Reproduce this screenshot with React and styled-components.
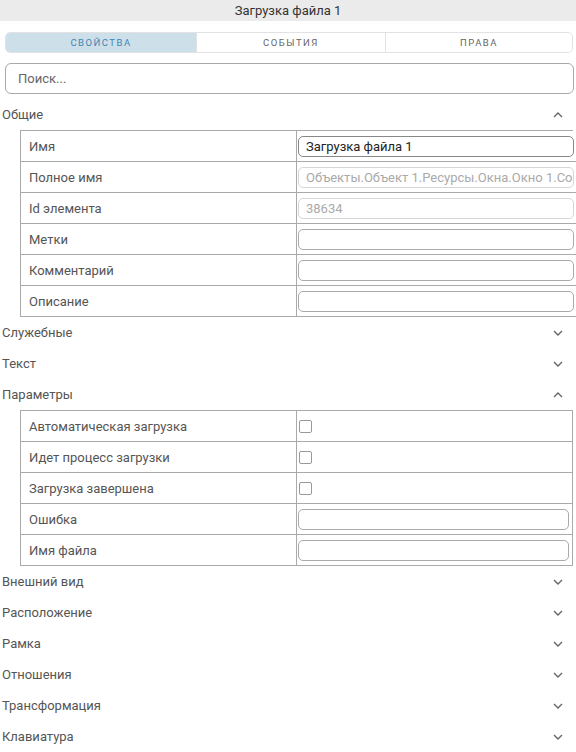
import React from "react";
import styled, { createGlobalStyle } from "styled-components";

const GlobalStyle = createGlobalStyle`
  html, body {
    margin: 0;
    padding: 0;
    background: #ffffff;
  }
  body {
    font-family: Roboto, "Liberation Sans", sans-serif;
    color: #555;
  }
`;

const general = [
  { label: "Имя", kind: "input", value: "Загрузка файла 1", strong: true },
  { label: "Полное имя", kind: "input", value: "Объекты.Объект 1.Ресурсы.Окна.Окно 1.Со", disabled: true },
  { label: "Id элемента", kind: "input", value: "38634", disabled: true },
  { label: "Метки", kind: "input", value: "" },
  { label: "Комментарий", kind: "input", value: "" },
  { label: "Описание", kind: "input", value: "" },
];

const params = [
  { label: "Автоматическая загрузка", kind: "check" },
  { label: "Идет процесс загрузки", kind: "check" },
  { label: "Загрузка завершена", kind: "check" },
  { label: "Ошибка", kind: "input", value: "" },
  { label: "Имя файла", kind: "input", value: "" },
];

const sections = [
  { title: "Общие", open: true, rows: general },
  { title: "Служебные" },
  { title: "Текст" },
  { title: "Параметры", open: true, rows: params },
  { title: "Внешний вид" },
  { title: "Расположение" },
  { title: "Рамка" },
  { title: "Отношения" },
  { title: "Трансформация" },
  { title: "Клавиатура" },
];

function Chevron({ up }) {
  return (
    <svg width="10" height="6" viewBox="0 0 10 6">
      <polyline
        points={up ? "1,5 5,1 9,5" : "1,1 5,5 9,1"}
        fill="none"
        stroke="#666"
        strokeWidth="1.4"
      />
    </svg>
  );
}

function Row({ row }) {
  return (
    <>
      <LabelCell>{row.label}</LabelCell>
      <ValueCell>
        {row.kind === "check" ? (
          <CheckBox />
        ) : (
          <Field $disabled={row.disabled} $strong={row.strong}>
            {row.value}
          </Field>
        )}
      </ValueCell>
    </>
  );
}

function App() {
  return (
    <Panel>
      <GlobalStyle />
      <TitleBar>Загрузка файла 1</TitleBar>
      <Tabs>
        <Tab $active>Свойства</Tab>
        <Tab>События</Tab>
        <Tab>Права</Tab>
      </Tabs>
      <Search>Поиск...</Search>
      <Sections>
        {sections.map((s) => (
          <div key={s.title}>
            <SectionHeader>
              <span>{s.title}</span>
              <Chevron up={s.open} />
            </SectionHeader>
            {s.open && (
              <Table>
                {s.rows.map((r) => (
                  <Row key={r.label} row={r} />
                ))}
              </Table>
            )}
          </div>
        ))}
      </Sections>
    </Panel>
  );
}

const Panel = styled.div`
  width: 576px;
  height: 752px;
  overflow: hidden;
  display: flex;
  flex-direction: column;
`;

const TitleBar = styled.div`
  height: 22px;
  background: #ebebeb;
  color: #333;
  font-size: 13px;
  display: flex;
  align-items: center;
  justify-content: center;
`;

const Tabs = styled.div`
  margin: 11px 3px 0 5px;
  height: 23px;
  display: grid;
  grid-template-columns: 190px 189px 1fr;
  border: 1px solid #e2e2e2;
  border-radius: 5px;
  overflow: hidden;
  box-sizing: border-box;
`;

const Tab = styled.div`
  display: flex;
  align-items: center;
  justify-content: center;
  text-transform: uppercase;
  font-size: 9.5px;
  letter-spacing: 1.5px;
  background: ${(p) => (p.$active ? "#cde0ea" : "#fff")};
  color: ${(p) => (p.$active ? "#3d86b3" : "#666")};
  & + & {
    border-left: 1px solid #e2e2e2;
  }
`;

const Search = styled.div`
  margin: 10px 2px 0 5px;
  height: 33px;
  box-sizing: border-box;
  border: 1px solid #aaa;
  border-radius: 6px;
  padding-left: 12px;
  display: flex;
  align-items: center;
  font-size: 13px;
  color: #666;
`;

const Sections = styled.div`
  margin-top: 5px;
  display: flex;
  flex-direction: column;
`;

const SectionHeader = styled.div`
  height: 31px;
  display: flex;
  align-items: center;
  justify-content: space-between;
  padding: 0 13px 0 2px;
  font-size: 13px;
  color: #555;
`;

const Table = styled.div`
  margin: 0 3px 0 20px;
  display: grid;
  grid-template-columns: 276px 1fr;
  grid-auto-rows: 31px;
  border-top: 1px solid #aaa;
  border-left: 1px solid #aaa;
`;

const LabelCell = styled.div`
  display: flex;
  align-items: center;
  padding-left: 8px;
  font-size: 13px;
  color: #555;
  border-right: 1px solid #aaa;
  border-bottom: 1px solid #aaa;
`;

const ValueCell = styled.div`
  display: flex;
  align-items: center;
  padding: 0 3px 0 1px;
  border-right: 1px solid #aaa;
  border-bottom: 1px solid #aaa;
`;

const Field = styled.div`
  flex: 1;
  height: 21px;
  box-sizing: border-box;
  border: 1px solid ${(p) => (p.$disabled ? "#d6d6d6" : p.$strong ? "#888" : "#aaa")};
  border-radius: 5px;
  padding-left: 7px;
  display: flex;
  align-items: center;
  font-size: 13px;
  white-space: nowrap;
  overflow: hidden;
  color: ${(p) => (p.$disabled ? "#aaa" : "#222")};
`;

const CheckBox = styled.div`
  margin-left: 1px;
  width: 13px;
  height: 13px;
  box-sizing: border-box;
  border: 1.5px solid #999;
  border-radius: 2px;
`;

export default App;
